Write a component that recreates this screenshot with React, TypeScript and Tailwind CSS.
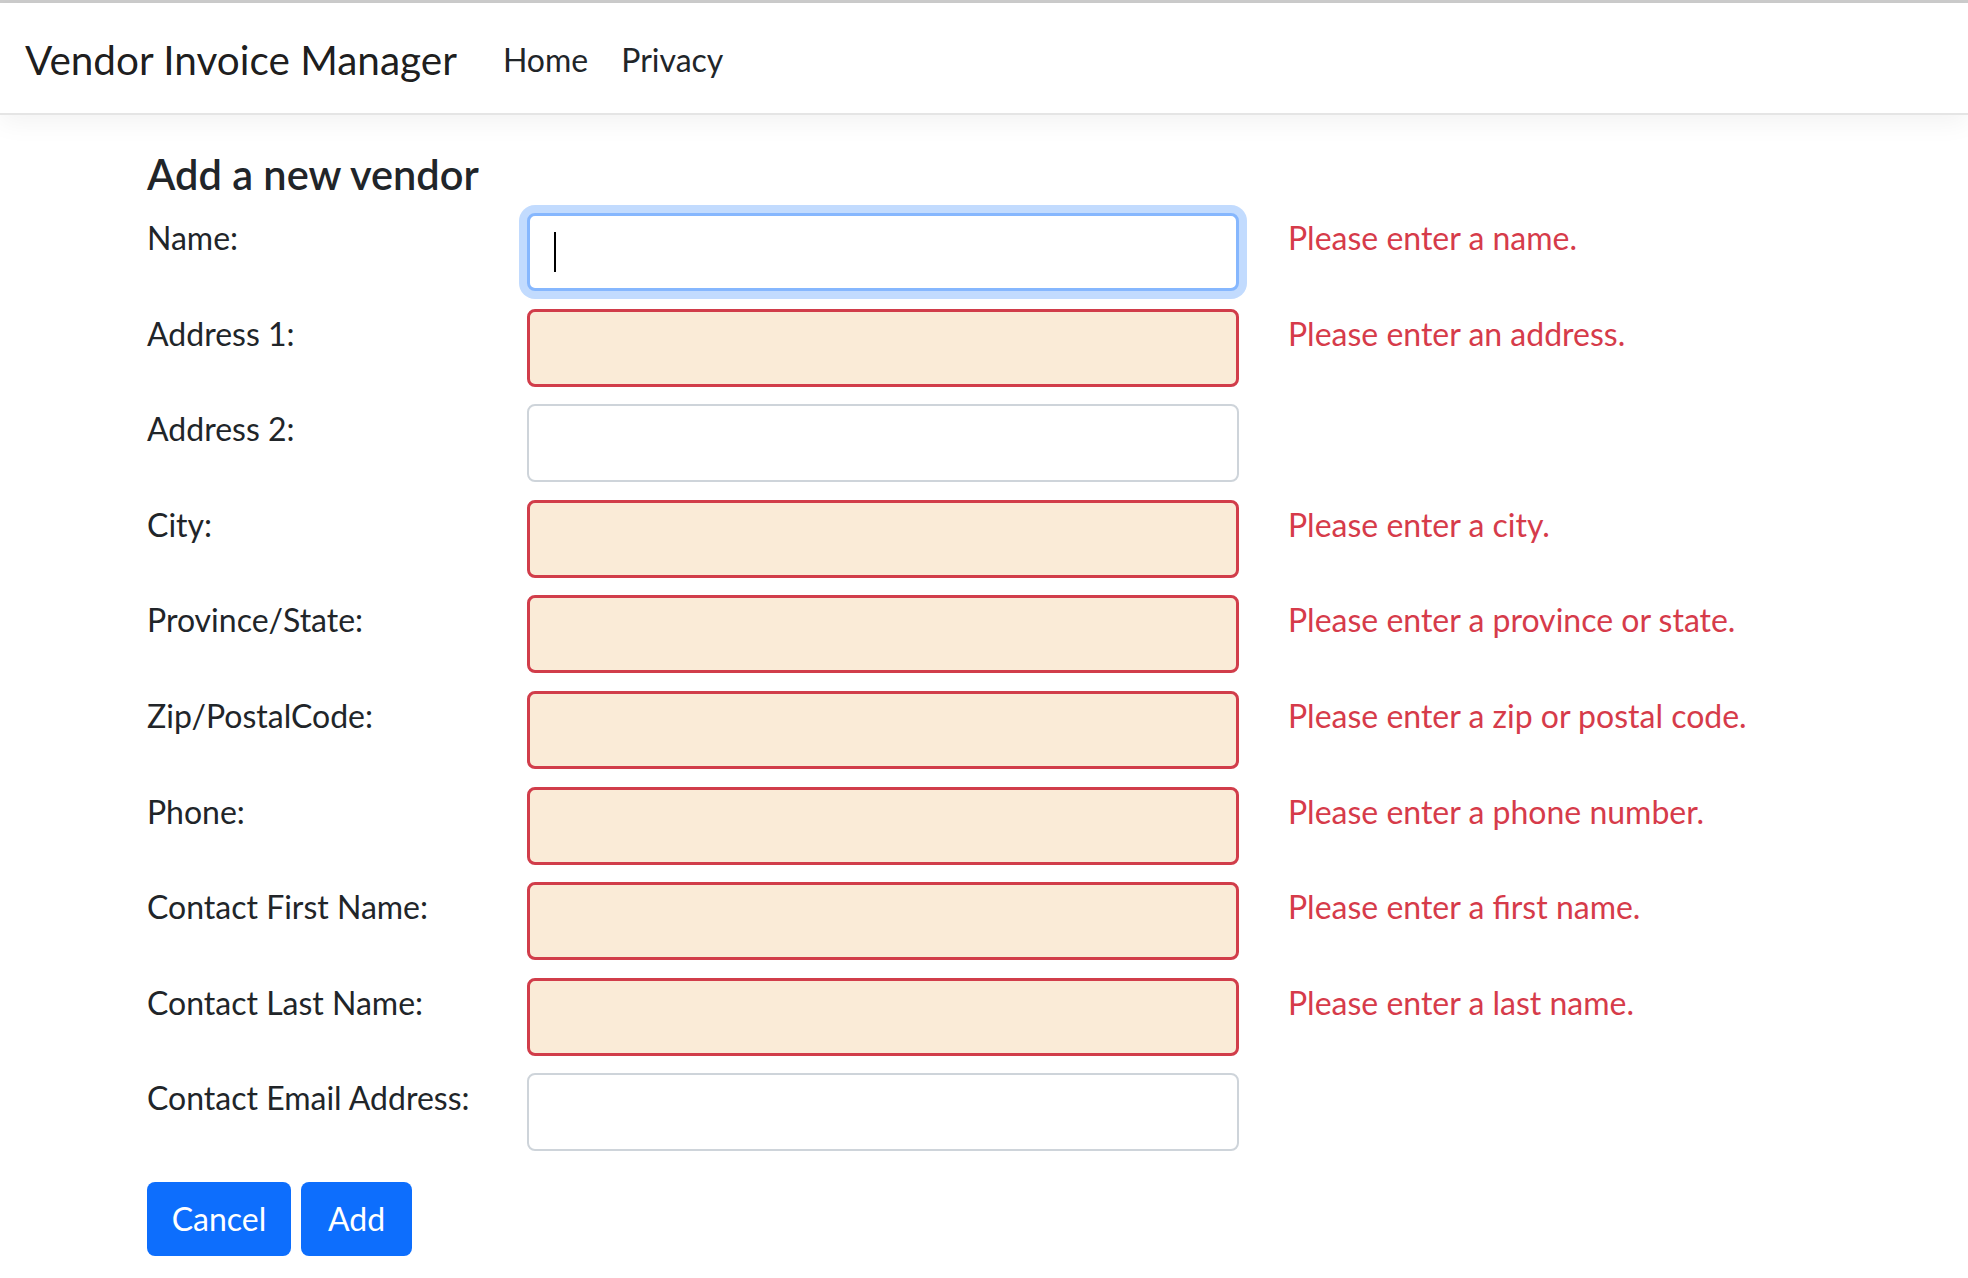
import React from "react";

const rows: { label: string; error?: string; focus?: boolean }[] = [
  { label: "Name:", error: "Please enter a name.", focus: true },
  { label: "Address 1:", error: "Please enter an address." },
  { label: "Address 2:" },
  { label: "City:", error: "Please enter a city." },
  { label: "Province/State:", error: "Please enter a province or state." },
  { label: "Zip/PostalCode:", error: "Please enter a zip or postal code." },
  { label: "Phone:", error: "Please enter a phone number." },
  { label: "Contact First Name:", error: "Please enter a first name." },
  { label: "Contact Last Name:", error: "Please enter a last name." },
  { label: "Contact Email Address:" },
];

export default function App() {
  return (
    <div
      className="min-h-[1278px] w-full bg-white text-[#212529] text-[32px] leading-[48px]"
      style={{ fontFamily: '"Lato", "Open Sans", sans-serif' }}
    >
      <div className="h-[3px] bg-[#cccccc]" />
      <nav className="h-[112px] flex items-center border-b-2 border-[#e5e5e5] shadow-[0_8px_24px_rgba(0,0,0,0.05)] pl-[25px]">
        <span className="text-[40.5px] leading-[60px] text-black/90 mr-[46px] mt-[3px]">
          Vendor Invoice Manager
        </span>
        <span className="text-[32px] text-[#212529] mt-[3px]">Home</span>
        <span className="text-[32px] text-[#212529] ml-[33px] mt-[3px]">Privacy</span>
      </nav>
      <main className="pl-[147px] pt-[35px]">
        <h4 className="text-[41.5px] leading-[48px] font-semibold mb-[15px]">Add a new vendor</h4>
        <div className="flex flex-col gap-[17.6px]">
          {rows.map((r) => (
            <div key={r.label} className="flex items-start">
              <label className="w-[380px] shrink-0 mt-[1px]">{r.label}</label>
              <div className="w-[712px] shrink-0">
                {r.focus ? (
                  <div className="h-[78px] rounded-[8px] border-[3px] border-[#86b7fe] bg-white shadow-[0_0_0_8px_rgba(13,110,253,0.25)] flex items-center pl-[24px]">
                    <div className="w-[2px] h-[40px] bg-black" />
                  </div>
                ) : r.error ? (
                  <div className="h-[78px] rounded-[8px] border-[3px] border-[#d13d4a] bg-[#faebd7]" />
                ) : (
                  <div className="h-[78px] rounded-[8px] border-2 border-[#ced4da] bg-white" />
                )}
              </div>
              {r.error && <span className="ml-[49px] mt-[1px] text-[#d63b4a]">{r.error}</span>}
            </div>
          ))}
        </div>
        <div className="flex gap-[10px] mt-[31px]">
          <button className="h-[74px] w-[144px] rounded-[8px] bg-[#0d6efd] text-white text-[32px]">Cancel</button>
          <button className="h-[74px] w-[111px] rounded-[8px] bg-[#0d6efd] text-white text-[32px]">Add</button>
        </div>
      </main>
    </div>
  );
}
